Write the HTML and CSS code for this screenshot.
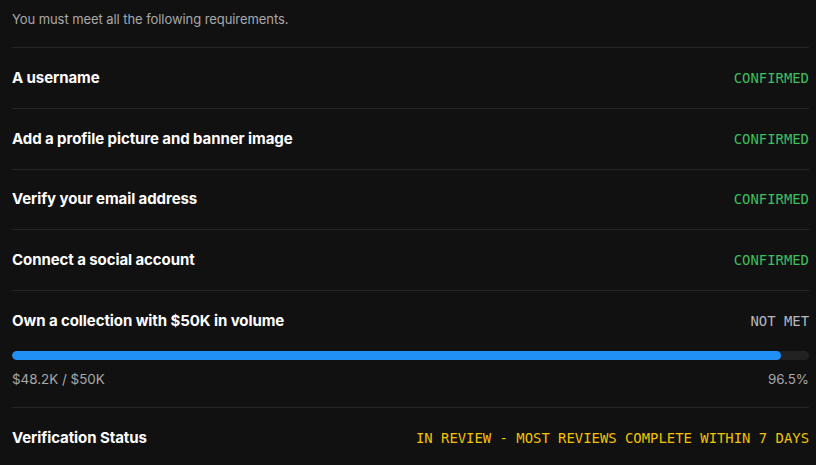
FILE: index.html
```html
<!DOCTYPE html>
<html lang="en">
<head>
    <meta charset="UTF-8">
    <meta name="viewport" content="width=device-width, initial-scale=1.0">
    <title>Verification Requirements</title>
    <link rel="stylesheet" href="styles.css">
</head>
<body>

    <div class="requirements">
        <p class="intro">You must meet all the following requirements.</p>

        <!-- Checklist -->
        <div class="req-row">
            <span class="req-title">A username</span>
            <span class="req-status confirmed">CONFIRMED</span>
        </div>

        <div class="req-row">
            <span class="req-title">Add a profile picture and banner image</span>
            <span class="req-status confirmed">CONFIRMED</span>
        </div>

        <div class="req-row">
            <span class="req-title">Verify your email address</span>
            <span class="req-status confirmed">CONFIRMED</span>
        </div>

        <div class="req-row">
            <span class="req-title">Connect a social account</span>
            <span class="req-status confirmed">CONFIRMED</span>
        </div>

        <!-- Volume requirement with progress -->
        <div class="req-block">
            <div class="req-head">
                <span class="req-title">Own a collection with $50K in volume</span>
                <span class="req-status not-met">NOT MET</span>
            </div>
            <div class="progress">
                <div class="progress-fill" style="width: 96.5%"></div>
            </div>
            <div class="progress-labels">
                <span>$48.2K / $50K</span>
                <span>96.5%</span>
            </div>
        </div>

        <div class="req-row last">
            <span class="req-title">Verification Status</span>
            <span class="req-status review">IN REVIEW - MOST REVIEWS COMPLETE WITHIN 7 DAYS</span>
        </div>
    </div>

</body>
</html>
```

FILE: styles.css
```css
body {
    font-family: 'Inter', 'Noto Sans', sans-serif;
    margin: 0;
    padding: 0;
    background-color: #111111;
    color: #ffffff;
}

.requirements {
    margin: 0 7px 0 12px;
}

.intro {
    margin: 0;
    padding: 9px 0 18px;
    font-size: 13px;
    line-height: 20px;
    letter-spacing: -0.07px;
    color: #a9a9a9;
    border-bottom: 1px solid #262626;
}

.req-row,
.req-head {
    display: flex;
    justify-content: space-between;
    align-items: center;
}

.req-row {
    height: 59.75px;
    border-bottom: 1px solid #262626;
}

.req-row.last {
    height: 60px;
    border-bottom: none;
}

.req-title {
    font-size: 15px;
    font-weight: 700;
    line-height: 20px;
    letter-spacing: -0.08px;
}

.req-status {
    font-family: 'DejaVu Sans Mono', 'Liberation Mono', monospace;
    font-size: 13.9px;
    line-height: 20px;
}

.confirmed {
    color: #3dbf5e;
}

.not-met {
    color: #b8b8b8;
}

.review {
    color: #f2c200;
}

.req-block {
    padding: 20px 0 18px;
    border-bottom: 1px solid #262626;
}

.progress {
    margin-top: 20px;
    height: 9px;
    border-radius: 5px;
    background-color: #222222;
    overflow: hidden;
}

.progress-fill {
    height: 100%;
    border-radius: 5px;
    background-color: #2190f6;
}

.progress-labels {
    display: flex;
    justify-content: space-between;
    margin-top: 9px;
    font-size: 13.4px;
    line-height: 20px;
    color: #a9a9a9;
}
```
